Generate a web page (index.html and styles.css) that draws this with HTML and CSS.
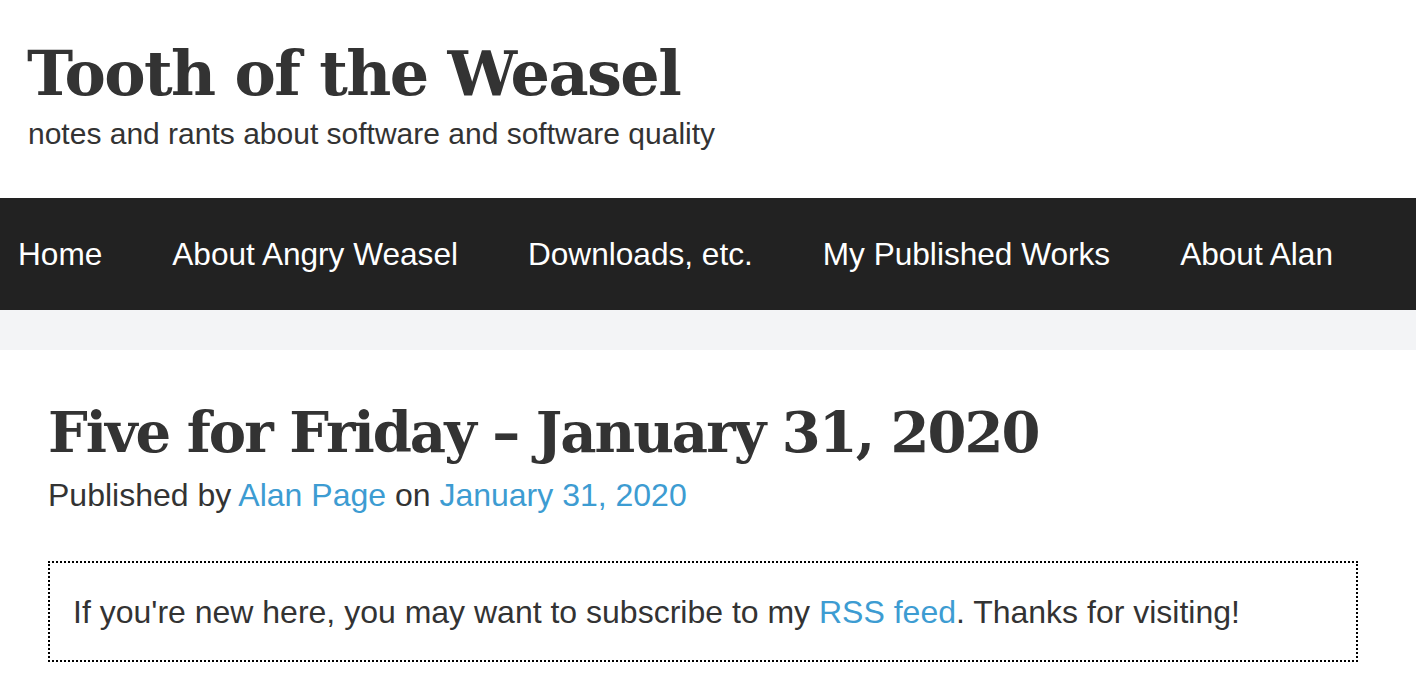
FILE: index.html
```html
<!DOCTYPE html>
<html lang="en">
<head>
<meta charset="utf-8">
<title>Tooth of the Weasel</title>
<link rel="stylesheet" href="styles.css">
</head>
<body>
<header class="site-header">
  <div class="site-title">Tooth of the Weasel</div>
  <div class="site-tagline">notes and rants about software and software quality</div>
</header>
<nav class="main-nav">
  <a href="#">Home</a>
  <a href="#">About Angry Weasel</a>
  <a href="#">Downloads, etc.</a>
  <a href="#">My Published Works</a>
  <a href="#">About Alan</a>
</nav>
<div class="band"></div>
<main class="content">
  <h1 class="post-title">Five for Friday – January 31, 2020</h1>
  <div class="post-meta">Published by <a href="#">Alan Page</a> on <a href="#">January 31, 2020</a></div>
  <div class="notice">If you're new here, you may want to subscribe to my <a href="#">RSS feed</a>. Thanks for visiting!</div>
</main>
</body>
</html>
```
FILE: styles.css
```css
html, body {
  margin: 0;
  padding: 0;
  background: #fff;
  color: #333;
  font-family: "Liberation Sans", Arial, sans-serif;
}
a { color: #3d9cd2; text-decoration: none; }

.site-header {
  padding: 38px 0 0 27px;
  height: 160px;
  box-sizing: border-box;
}
.site-title {
  font-family: "DejaVu Serif", Georgia, serif;
  font-weight: bold;
  font-size: 62px;
  line-height: 72px;
  letter-spacing: -1.6px;
}
.site-tagline {
  font-size: 30px;
  line-height: 34px;
  margin-top: 7px;
  margin-left: 1px;
}

.main-nav {
  margin-top: 38px;
  background: #222;
  height: 112px;
  display: flex;
  align-items: center;
  gap: 70px;
  padding-left: 18px;
}
.main-nav a {
  color: #fff;
  font-size: 31.6px;
}

.band {
  background: #f3f4f6;
  height: 40px;
}

.content {
  padding: 46px 48px 0 48px;
  width: 1310px;
}
.post-title {
  margin: 0;
  font-family: "DejaVu Serif", Georgia, serif;
  font-weight: bold;
  font-size: 56px;
  line-height: 72px;
  letter-spacing: -2px;
}
.post-meta {
  font-size: 32px;
  line-height: 40px;
  margin-top: 7px;
}
.notice {
  margin-top: 46px;
  border: 2px dotted #000;
  padding: 29px 23px 28px;
  font-size: 32px;
  line-height: 40px;
}
```
